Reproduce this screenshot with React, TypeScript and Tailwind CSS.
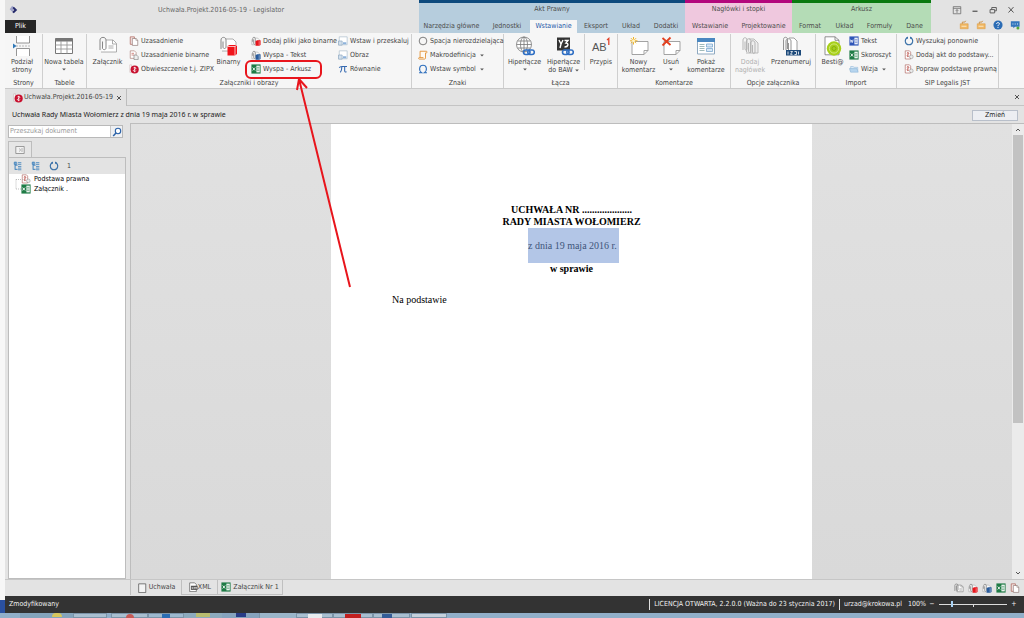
import React from 'react';

type IconProps = { className?: string };
type Icon = (props: IconProps) => React.JSX.Element;

const Clip = () => (
  <path d="M2 7V3.2C2 .9 5.2.9 5.2 3.2V9c0 1.4-2 1.4-2 0V4" fill="none" stroke="#8b8b8b" strokeWidth="1" />
);

const PaperClip: Icon = ({ className }) => (
  <svg viewBox="0 0 12 12" className={className}>
    <path d="M3.5 2.5h5l2.5 2v6h-7.5z" fill="#fafafa" stroke="#888" strokeWidth=".8" />
    <path d="M8.3 2.5v2.2H11M6.5 7h3M6.5 8.6h3" fill="none" stroke="#888" strokeWidth=".6" />
    <path d="M1 9.5V2.8C1 .6 4.8.6 4.8 2.8V8c0 1.3-2 1.3-2 0V3.6" fill="none" stroke="#777" strokeWidth=".8" />
  </svg>
);

const clipWith = (color: string): Icon => ({ className }) => (
  <svg viewBox="0 0 12 12" className={className}>
    <path d="M4 2.5h4l2 2v6H1V4" fill="#fafafa" stroke="#999" strokeWidth=".6" />
    <Clip />
    <path d="M5.5 6l2-.8h4v5.6l-1.6 1H5.5z" fill={color} />
    <path d="M9.8 6.2v5" stroke="#fff" strokeWidth=".5" />
  </svg>
);
const ClipRed = clipWith('#e8151c');
const ClipBlue = clipWith('#285b9c');

const ReadDoc: Icon = ({ className }) => (
  <svg viewBox="0 0 12 12" className={className}>
    <path d="M1.5 1h5v9h-5z" fill="#f5e6e4" stroke="#a8574d" strokeWidth=".8" />
    <path d="M4 3h4.5l2 2v6.3H4z" fill="#fff" stroke="#8c7672" strokeWidth=".8" />
    <path d="M8.3 3v2.2h2.2" fill="none" stroke="#8c7672" strokeWidth=".6" />
  </svg>
);

const ReadDocs: Icon = ({ className }) => (
  <svg viewBox="0 0 12 12" className={className}>
    <path d="M1.5 1h5l2 2v7h-7z" fill="#fff" stroke="#a06a63" strokeWidth=".7" />
    <path d="M3 4h3M3 6h3" stroke="#c0544c" strokeWidth=".8" />
    <path d="M6 6h3l2 2v3.5H6z" fill="#eee" stroke="#777" strokeWidth=".7" />
  </svg>
);

const Emblem: Icon = ({ className }) => (
  <svg viewBox="0 0 12 12" className={className}>
    <path d="M1 1h2v9H1z" fill="#fff" stroke="#b99" strokeWidth=".5" />
    <circle cx="6.8" cy="6.6" r="4.9" fill="#c8102e" />
    <path d="M6.8 3.4v6.4M5.2 5c0-1 3.2-1 3.2 0S5.2 7 5.2 8s3.2 1 3.2 0" fill="none" stroke="#fff" strokeWidth=".9" />
  </svg>
);

const Sheet: Icon = ({ className }) => (
  <svg viewBox="0 0 12 12" className={className}>
    <path d="M.5.5h11v11H.5z" fill="#1e7b45" />
    <path d="M6.5 2h4v8h-4z" fill="#fff" />
    <path d="M7 4h3M7 6h3M7 8h3" stroke="#1e7b45" strokeWidth=".7" />
    <path d="M2 4.2l3 3.6M5 4.2L2 7.8" stroke="#fff" strokeWidth="1" />
  </svg>
);

const WordDoc: Icon = ({ className }) => (
  <svg viewBox="0 0 12 12" className={className}>
    <path d="M.5.5h11v11H.5z" fill="#2f55b8" />
    <path d="M6.5 2h4v8h-4z" fill="#fff" />
    <path d="M7 4h3M7 6h3M7 8h3" stroke="#2f55b8" strokeWidth=".7" />
    <path d="M1.6 4.2l.8 3.6.9-3 .9 3 .8-3.6" fill="none" stroke="#fff" strokeWidth=".8" />
  </svg>
);

const Picture: Icon = ({ className }) => (
  <svg viewBox="0 0 12 12" className={className}>
    <path d="M1.500 1h9.500v9.500H1.500z" fill="#fff" stroke="#a9bccb" strokeWidth=".8" />
    <path d="M.6 6h4.400v5H.6z" fill="#d3e0ec" stroke="#7f9dba" strokeWidth=".7" />
    <path d="M6 7.500h4v2.500H6z" fill="#8db2db" />
  </svg>
);

const Pi: Icon = ({ className }) => (
  <svg viewBox="0 0 12 12" className={className}>
    <path d="M1.500 4.500C2.500 2.500 4 3 6 3h4.800M4.600 3.200c0 3-.4 5-1.800 6.800M8 3.200v5c0 1.500 1 1.800 2.200.9" fill="none" stroke="#3569b0" strokeWidth="1.300" />
  </svg>
);

const Ring: Icon = ({ className }) => (
  <svg viewBox="0 0 12 12" className={className}>
    <circle cx="6" cy="6" r="4.600" fill="none" stroke="#555" strokeWidth=".9" />
  </svg>
);

const Scroll: Icon = ({ className }) => (
  <svg viewBox="0 0 12 12" className={className}>
    <path d="M2.500 9V1.500h7.500c1.200 0 1.200 2 0 2H9V9.500c0 1.400-1 1.400-1.500 1.400h-6c-1 0-1-1.800 0-1.800h5" fill="#fffaf2" stroke="#e18a28" strokeWidth="1" />
  </svg>
);

const Omega: Icon = ({ className }) => (
  <svg viewBox="0 0 12 12" className={className}>
    <path d="M1.200 10.500h3.200c-4-3-3-9 1.600-9s5.600 6 1.600 9h3.200" fill="none" stroke="#3070bd" strokeWidth="1.300" />
  </svg>
);

const Folder: Icon = ({ className }) => (
  <svg viewBox="0 0 12 12" className={className}>
    <path d="M2 9V3h3l1 1h4.500v5" fill="#dcebf7" stroke="#83aed3" strokeWidth=".6" />
    <path d="M.5 5.500h9L11 9.800H2z" fill="#b7d5ee" stroke="#83aed3" strokeWidth=".6" />
  </svg>
);

const Refresh: Icon = ({ className }) => (
  <svg viewBox="0 0 12 12" className={className}>
    <path d="M4 2C0 4 1 10.500 6 10.500S12 4 8 2" fill="none" stroke="#3a71a8" strokeWidth="1.300" />
    <path d="M4.800.6v3L2.300 2zM7.200.6v3L9.700 2z" fill="#3a71a8" />
  </svg>
);

const Rules: Icon = ({ className }) => (
  <svg viewBox="0 0 12 12" className={className}>
    <path d="M1.500 1h5l1.500 1.500v8.300H1.500z" fill="#fff" stroke="#a5554d" strokeWidth=".7" />
    <path d="M4.700 2.500v6M3.500 4c0-1 2.400-1 2.400 0S3.500 6 3.500 7s2.400 1 2.400 0" fill="none" stroke="#b23b33" strokeWidth=".7" />
    <circle cx="8.800" cy="8.200" r="2.200" fill="#eaeaea" stroke="#888" strokeWidth=".6" />
  </svg>
);

const TreeGlyph: Icon = ({ className }) => (
  <svg viewBox="0 0 12 12" className={className}>
    <path d="M2.500 1v9.500M2.500 5h3M2.500 10h3" fill="none" stroke="#3f82bd" strokeWidth="1.200" />
    <path d="M1.500 1.500h3v2.500h-3zM6 2h4M6 4h4M6 6.500h4M6 8.500h4M6 10.500h4" fill="none" stroke="#3f82bd" strokeWidth="1" />
  </svg>
);

const BlankBox: Icon = ({ className }) => (
  <svg viewBox="0 0 12 12" className={className}>
    <path d="M2 1h8.500v10.500H2z" fill="#f4f4f4" stroke="#555" strokeWidth=".9" />
  </svg>
);

const XmlDoc: Icon = ({ className }) => (
  <svg viewBox="0 0 12 12" className={className}>
    <path d="M2 1h6l2 2v8.500H2z" fill="#fff" stroke="#555" strokeWidth=".8" />
    <path d="M3.500 4.500h8v5h-8z" fill="#555" />
    <path d="M4.500 6l2 2.500M6.500 6l-2 2.500M8 8.500V6l1 1.500L10 6v2.500" fill="none" stroke="#fff" strokeWidth=".6" />
  </svg>
);

const PageBreak: Icon = ({ className }) => (
  <svg viewBox="0 0 20 20" className={className}>
    <path d="M4.500 0v7h13V0M4.500 20v-7.500h13V20" fill="#fff" stroke="#8a8a8a" strokeWidth=".9" />
    <path d="M4 10h14" stroke="#aaa" strokeDasharray="2 1" strokeWidth=".8" />
    <path d="M1 7.500L4.500 10 1 12.500z" fill="#2f78b7" />
  </svg>
);

const TableIcon: Icon = ({ className }) => (
  <svg viewBox="0 0 20 20" className={className}>
    <path d="M1.500 2.500h17v15h-17z" fill="#fff" stroke="#777" />
    <path d="M1.500 2.500h17v3h-17z" fill="#777" />
    <path d="M1.500 9h17M1.500 13h17M7 5v12.500M13 5v12.500" stroke="#999" strokeWidth=".9" />
  </svg>
);

const BigClip: Icon = ({ className }) => (
  <svg viewBox="0 0 20 20" className={className}>
    <path d="M8 4h7l3.500 3.500V16H3" fill="#fff" stroke="#999" strokeWidth=".8" />
    <path d="M14.500 4v4h4M10.500 10h5M10.500 12h5" fill="none" stroke="#999" strokeWidth=".8" />
    <path d="M2 14V4c0-3.500 6-3.500 6 0v8c0 2.200-3.500 2.200-3.500 0V5.500" fill="none" stroke="#888" strokeWidth="1" />
  </svg>
);

const BigBinary: Icon = ({ className }) => (
  <svg viewBox="0 0 20 20" className={className}>
    <path d="M7 3h7l3 3v9H3" fill="#fff" stroke="#999" strokeWidth=".8" />
    <path d="M2 13V4c0-3.500 5-3.500 5 0v7c0 2-3 2-3 0V5.500" fill="none" stroke="#888" strokeWidth="1" />
    <path d="M8.500 10l2-1h7.500v9l-2 1.500H8.500z" fill="#f0141b" />
    <path d="M16 10.500v9M8.500 10.500H16l2-1.500" fill="none" stroke="#fff" strokeWidth=".7" />
  </svg>
);

const Links = () => (
  <g fill="none" stroke="#2f6fc4" strokeWidth="1.600">
    <rect x="8.500" y="14" width="6.500" height="4.500" rx="2.200" />
    <rect x="12.800" y="14" width="6.500" height="4.500" rx="2.200" />
  </g>
);

const Globe: Icon = ({ className }) => (
  <svg viewBox="0 0 20 20" className={className}>
    <g fill="none" stroke="#777" strokeWidth=".8">
      <circle cx="9" cy="8.500" r="7.500" fill="#fff" />
      <ellipse cx="9" cy="8.500" rx="3.500" ry="7.500" />
      <path d="M1.500 8.500h15M2.500 5h13M2.500 12h13M9 1v15" />
    </g>
    <Links />
  </svg>
);

const Baw: Icon = ({ className }) => (
  <svg viewBox="0 0 20 20" className={className}>
    <path d="M3 1.500h13v13H3z" fill="#333" />
    <path d="M5 4l2 4 2-4M7 8l-1 4M10.500 4.500h3.500l-2 2.500c3 0 2.500 4-1.500 4" fill="none" stroke="#fff" strokeWidth="1.400" />
    <Links />
  </svg>
);

const Footnote: Icon = ({ className }) => (
  <svg viewBox="0 0 20 20" className={className}>
    <text x="1" y="15" fontSize="11" fill="#555" fontFamily="Liberation Sans">AB</text>
    <path d="M16 4l1.800-1.500V9" fill="none" stroke="#e2452d" strokeWidth="1.300" />
  </svg>
);

const NewNote: Icon = ({ className }) => (
  <svg viewBox="0 0 20 20" className={className}>
    <path d="M3 5.500h16v9l-4 4H3z" fill="#fff" stroke="#999" strokeWidth=".9" />
    <path d="M15 18.500v-4h4" fill="none" stroke="#999" strokeWidth=".9" />
    <path d="M4.500 1v7.500M1 4.800h7.500M2 2.200l5 5M7 2.200l-5 5" stroke="#f0b323" strokeWidth="1" />
    <circle cx="4.500" cy="4.800" r="1.500" fill="#fff4c6" />
  </svg>
);

const DropNote: Icon = ({ className }) => (
  <svg viewBox="0 0 20 20" className={className}>
    <path d="M3 5.500h16v9l-4 4H3z" fill="#fff" stroke="#999" strokeWidth=".9" />
    <path d="M15 18.500v-4h4" fill="none" stroke="#999" strokeWidth=".9" />
    <path d="M1.500 2l8 7M9.500 1.500l-8 8" stroke="#e2401f" strokeWidth="1.800" />
  </svg>
);

const ShowNotes: Icon = ({ className }) => (
  <svg viewBox="0 0 20 20" className={className}>
    <path d="M1.500 2.500h17v15.500h-17z" fill="#fff" stroke="#8fa9c0" />
    <path d="M1 2h18v4H1z" fill="#4a87c0" />
    <path d="M3.500 8.500h5M3.500 10.500h5M3.500 12.500h5M3.500 14.500h5" stroke="#8aa" strokeWidth=".8" />
    <path d="M10.500 8h6v3h-6zM10.500 12.500h6v3h-6z" fill="#d8e9f7" stroke="#6e9ec8" strokeWidth=".7" />
  </svg>
);

const ClipsGrey: Icon = ({ className }) => (
  <svg viewBox="0 0 20 20" className={className}>
    <path d="M9 3h5l4 4v10H6" fill="#eee" stroke="#bbb" />
    <g fill="none" stroke="#b5b5b5" strokeWidth="1">
      <path d="M3 14V4c0-3 4-3 4 0v9c0 1.500-2 1.500-2 0V5.500M6.500 16V5c0-3 4.500-3 4.500 0v10c0 2-2.500 2-2.500 0V7M10.500 17V7c0-3 4.500-3 4.500 0v9c0 2-2.500 2-2.500 0V9" />
    </g>
  </svg>
);

const Renumber: Icon = ({ className }) => (
  <svg viewBox="0 0 20 20" className={className}>
    <path d="M8 2h5l3 3v10H6" fill="#fff" stroke="#888" strokeWidth=".8" />
    <path d="M2.500 14V3.500c0-3 4-3 4 0V13M5 14V5c0-3 5-3 5 0v9c0 1.800-2.500 1.800-2.500 0V7" fill="none" stroke="#888" strokeWidth=".9" />
    <path d="M5 14h15v5.500H5z" fill="#1d4a7a" />
    <path d="M7 15.500v3M9.500 15.500h2l-2 2.800h2M13.500 15.500h2v3h-2M17.500 15.500v3" fill="none" stroke="#fff" strokeWidth=".8" />
  </svg>
);

const Bestia: Icon = ({ className }) => (
  <svg viewBox="0 0 20 20" className={className}>
    <path d="M2 .8h10l4 3.500v14.500H2z" fill="#fff" stroke="#777" strokeWidth=".8" />
    <path d="M12 .8v3.500h4" fill="none" stroke="#777" strokeWidth=".8" />
    <circle cx="11" cy="12.500" r="7.200" fill="#a7cf1a" />
    <circle cx="11" cy="12.500" r="4.600" fill="none" stroke="#d3e97a" strokeWidth="1" />
    <path d="M9 12.500a2 2 0 114 0 2 2 0 01-4 0" fill="none" stroke="#82aa10" strokeWidth=".9" />
  </svg>
);

function Small({ icon: I, label, arrow }: { icon: Icon; label: string; arrow?: boolean }) {
  return (
    <button className="flex h-3.5 items-center gap-0.5 whitespace-nowrap">
      <I className="size-2.5 shrink-0" />
      <span>{label}</span>
      {arrow && <Caret className="ml-0.5" />}
    </button>
  );
}

function Caret({ className = '' }: IconProps) {
  return (
    <svg viewBox="0 0 4 3" className={`h-[3px] w-1 ${className}`}>
      <path d="M.2.400h3.600L2 2.500z" fill="#555" />
    </svg>
  );
}

type BigProps = { icon: Icon; lines: string[]; width: string; arrow?: boolean; disabled?: boolean };

function Big({ icon: I, lines, width, arrow, disabled }: BigProps) {
  return (
    <button
      disabled={disabled}
      className={`flex ${width} shrink-0 flex-col items-center whitespace-nowrap pt-0.5 leading-[8px] disabled:text-[#b0b0b0]`}
    >
      <I className="mb-0.5 size-5 shrink-0" />
      {lines.map((line, i) => (
        <span key={line} className="flex items-center gap-0.5">
          {line}
          {arrow && i === 1 && <Caret />}
        </span>
      ))}
      {arrow && lines.length === 1 && <Caret className="mt-0.5" />}
    </button>
  );
}

function Group({ title, width, children }: { title: string; width: string; children: React.ReactNode }) {
  return (
    <section className={`flex ${width} shrink-0 flex-col`}>
      <div className="flex h-11 border-r border-[#cfcfcf]">{children}</div>
      <h2 className="flex h-2.5 items-center justify-center border-r border-[#cfcfcf]">{title}</h2>
    </section>
  );
}

type Tab = { label: string; width: string; active?: boolean };

function TabSet({ title, colors, tabs }: { title: string; colors: string; tabs: Tab[] }) {
  return (
    <div className={`flex shrink-0 flex-col border-t-[3px] ${colors}`}>
      <div className="flex h-[13px] items-center justify-center">{title}</div>
      <div className="mt-1 flex h-[13px]">
        {tabs.map((t) => (
          <button
            key={t.label}
            className={`${t.width} whitespace-nowrap ${t.active ? 'bg-[#f6f6f6] text-[#2559a8]' : ''}`}
          >
            {t.label}
          </button>
        ))}
      </div>
    </div>
  );
}

function TitleBar() {
  return (
    <header className="flex h-[33px] shrink-0 bg-[#e3e3e3] text-[#4c4c4c]">
      <div className="flex w-[414px] shrink-0 flex-col justify-between">
        <div className="flex h-5 items-center">
          <svg viewBox="0 0 12 12" className="ml-[3px] size-2.5">
            <path d="M5 1l3 3-3 4-3-3z" fill="#9fa3c9" />
            <path d="M7 2l4 4-4 4-2-1.500L7.500 6 5.500 3.500z" fill="#252a6b" />
          </svg>
          <h1 className="flex-1 pl-[5px] text-center text-[#666]">Uchwała.Projekt.2016-05-19 - Legislator</h1>
        </div>
        <button className="h-[13px] w-[31px] bg-[#262626] text-white">Plik</button>
      </div>
      <TabSet
        title="Akt Prawny"
        colors="border-[#0d4a7d] bg-[#b6cddd]"
        tabs={[
          { label: 'Narzędzia główne', width: 'w-[65px]' },
          { label: 'Jednostki', width: 'w-[46px]' },
          { label: 'Wstawianie', width: 'w-[47px]', active: true },
          { label: 'Eksport', width: 'w-[38px]' },
          { label: 'Układ', width: 'w-8' },
          { label: 'Dodatki', width: 'w-[38px]' },
        ]}
      />
      <TabSet
        title="Nagłówki i stopki"
        colors="border-[#b3077c] bg-[#efc8de]"
        tabs={[
          { label: 'Wstawianie', width: 'w-[50px]' },
          { label: 'Projektowanie', width: 'w-[57px]' },
        ]}
      />
      <TabSet
        title="Arkusz"
        colors="border-[#0a7a10] bg-[#b4dcb6]"
        tabs={[
          { label: 'Format', width: 'w-9' },
          { label: 'Układ', width: 'w-[33px]' },
          { label: 'Formuły', width: 'w-[37px]' },
          { label: 'Dane', width: 'w-[33px]' },
        ]}
      />
      <div className="ml-auto flex flex-col items-end justify-between pb-[3px] pt-[5px] pr-1">
        <div className="flex gap-2 pr-1">
          <button aria-label="Zwiń wstążkę">
            <svg viewBox="0 0 12 12" className="size-2.5">
              <path d="M1.500 2h9v8.500h-9zM1.500 4h9M6 9.500V5.500M4.500 7L6 5.500 7.500 7" fill="none" stroke="#666" strokeWidth=".9" />
            </svg>
          </button>
          <button aria-label="Minimalizuj">
            <svg viewBox="0 0 12 12" className="size-2.5">
              <path d="M3 7.500h6" stroke="#555" strokeWidth="1.500" />
            </svg>
          </button>
          <button aria-label="Przywróć">
            <svg viewBox="0 0 12 12" className="size-2.5">
              <path d="M2.500 5.500h5.500v4H2.500zM4.500 5.500V3h5.500v4H8" fill="none" stroke="#555" strokeWidth="1.100" />
            </svg>
          </button>
          <button aria-label="Zamknij">
            <svg viewBox="0 0 12 12" className="size-2.5">
              <path d="M3 2.500l6 6.500M9 2.500L3 9" stroke="#555" strokeWidth="1.200" />
            </svg>
          </button>
        </div>
        <div className="flex gap-[7px]">
          {['a', 'b'].map((k) => (
            <svg key={k} viewBox="0 0 12 12" className="size-2.5">
              <path d="M1.500 4.500h9.500v6H1.500z" fill="#f0b763" stroke="#d9963a" strokeWidth=".6" />
              <path d="M4 4.500V2.500h3l1-1.500" fill="none" stroke="#c98834" strokeWidth="1" />
              <path d="M3 7.500h6" stroke="#fff0d4" strokeWidth="1" />
            </svg>
          ))}
          <svg viewBox="0 0 12 12" className="size-2.5">
            <circle cx="6" cy="6" r="5.500" fill="#2b6cb5" />
            <path d="M4.300 4.600C4.300 2.600 7.800 2.700 7.700 4.600 7.600 5.800 6 5.800 6 7.300M6 8.300v1.200" fill="none" stroke="#fff" strokeWidth="1.200" />
          </svg>
          <svg viewBox="0 0 12 12" className="size-2.5">
            <path d="M1 1.500h10.500v6.500H6l-2 2V8H1z" fill="#3276bd" />
            <path d="M3 4.800h1M5.700 4.800h1M8.400 4.800h1" stroke="#fff" strokeWidth="1.200" />
            <circle cx="9.500" cy="9.500" r="1.800" fill="#56a83c" />
          </svg>
        </div>
      </div>
    </header>
  );
}

function Ribbon() {
  return (
    <div className="flex h-[55px] shrink-0 overflow-hidden bg-[#f6f6f6] pt-px text-[#444]">
      <Group title="Strony" width="w-[38px]">
        <Big icon={PageBreak} lines={['Podział', 'strony']} width="w-[34px]" />
      </Group>
      <Group title="Tabele" width="w-11">
        <Big icon={TableIcon} lines={['Nowa tabela']} width="w-[42px]" arrow />
      </Group>
      <Group title="Załączniki i obrazy" width="w-[325px]">
        <Big icon={BigClip} lines={['Załącznik']} width="w-[41px]" />
        <div className="w-[87px] pl-px">
          <Small icon={ReadDoc} label="Uzasadnienie" />
          <Small icon={ReadDocs} label="Uzasadnienie binarne" />
          <Small icon={Emblem} label="Obwieszczenie t.j. ZIPX" />
        </div>
        <Big icon={BigBinary} lines={['Binarny']} width="w-[27px]" />
        <div className="ml-[9px] w-[87px]">
          <Small icon={ClipRed} label="Dodaj pliki jako binarne" />
          <Small icon={ClipBlue} label="Wyspa - Tekst" />
          <Small icon={Sheet} label="Wyspa - Arkusz" />
        </div>
        <div>
          <Small icon={Picture} label="Wstaw i przeskaluj" />
          <Small icon={Picture} label="Obraz" />
          <Small icon={Pi} label="Równanie" />
        </div>
      </Group>
      <Group title="Znaki" width="w-[92px]">
        <div className="pl-1.5">
          <Small icon={Ring} label="Spacja nierozdzielająca" />
          <Small icon={Scroll} label="Makrodefinicja" arrow />
          <Small icon={Omega} label="Wstaw symbol" arrow />
        </div>
      </Group>
      <Group title="Łącza" width="w-[114px]">
        <Big icon={Globe} lines={['Hiperłącze']} width="w-[41px]" arrow />
        <Big icon={Baw} lines={['Hiperłącze', 'do BAW']} width="w-[37px]" arrow />
        <div className="ml-0.5 h-9 border-l border-[#cfcfcf]" />
        <Big icon={Footnote} lines={['Przypis']} width="w-8" />
      </Group>
      <Group title="Komentarze" width="w-[113px]">
        <Big icon={NewNote} lines={['Nowy', 'komentarz']} width="w-[41px]" />
        <Big icon={DropNote} lines={['Usuń']} width="w-6" arrow />
        <Big icon={ShowNotes} lines={['Pokaż', 'komentarze']} width="w-[46px]" />
      </Group>
      <Group title="Opcje załącznika" width="w-[85px]">
        <Big icon={ClipsGrey} lines={['Dodaj', 'nagłówek']} width="w-[38px]" disabled />
        <Big icon={Renumber} lines={['Przenumeruj']} width="w-[44px]" />
      </Group>
      <Group title="Import" width="w-[81px]">
        <Big icon={Bestia} lines={['Besti@']} width="w-[33px]" />
        <div>
          <Small icon={WordDoc} label="Tekst" />
          <Small icon={Sheet} label="Skoroszyt" />
          <Small icon={Folder} label="Wizja" arrow />
        </div>
      </Group>
      <Group title="SIP Legalis JST" width="w-[102px]">
        <div className="pl-[7px]">
          <Small icon={Refresh} label="Wyszukaj ponownie" />
          <Small icon={Rules} label="Dodaj akt do podstawy..." />
          <Small icon={Rules} label="Popraw podstawę prawną" />
        </div>
      </Group>
    </div>
  );
}

function CloseMark() {
  return (
    <svg viewBox="0 0 6 6" className="size-1.5">
      <path d="M1 1l4 4M5 1L1 5" stroke="#444" strokeWidth=".9" />
    </svg>
  );
}

function SidePanel() {
  return (
    <aside className="flex w-[118px] shrink-0 flex-col">
      <div className="mt-0.5 flex h-[13px] w-[115px] border border-[#b9b9b9] bg-white">
        <input
          aria-label="Przeszukaj dokument"
          placeholder="Przeszukaj dokument"
          className="min-w-0 flex-1 px-px outline-none placeholder:text-[#9a9a9a]"
        />
        <button aria-label="Szukaj" className="flex w-3 items-center justify-center border-l border-[#c9c9c9] bg-[#eef0f3]">
          <svg viewBox="0 0 10 10" className="size-2.5">
            <circle cx="6" cy="4" r="2.700" fill="#fff" stroke="#2b62a8" strokeWidth="1.100" />
            <path d="M4 6L1.200 9" stroke="#2b62a8" strokeWidth="1.500" />
          </svg>
        </button>
      </div>
      <button
        aria-label="Struktura"
        className="mt-[3px] flex h-4 w-6 items-center justify-center border border-b-0 border-[#bdbdbd] bg-[#e6e6e6]"
      >
        <svg viewBox="0 0 10 10" className="size-2.5">
          <path d="M.8 1.500h8.400v7H.8z" fill="#f2f2f2" stroke="#888" strokeWidth=".8" />
          <path d="M4 3.500L5.800 5 4 6.500M7 3v4" fill="none" stroke="#999" strokeWidth=".7" />
        </svg>
      </button>
      <div className="flex min-h-0 flex-1 flex-col border border-[#bdbdbd] bg-white">
        <div className="flex h-4 items-center gap-2 bg-[#e3e3e3] pl-1">
          <TreeGlyph className="size-2.5" />
          <TreeGlyph className="size-2.5" />
          <Refresh className="size-2.5" />
          <span className="text-[#444]">1</span>
        </div>
        <ul className="relative pl-3 text-black">
          <svg viewBox="0 0 8 20" className="absolute left-1.5 top-0 h-5 w-2">
            <path d="M1 5.500V15M1 5.500h7M1 15h7" fill="none" stroke="#aaa" strokeWidth=".8" strokeDasharray="1 1" />
          </svg>
          <li className="flex h-2.5 items-center gap-[3px]">
            <Rules className="size-2.5" />
            Podstawa prawna
          </li>
          <li className="flex h-2.5 items-center gap-[3px]">
            <Sheet className="size-2.5" />
            Załącznik .
          </li>
        </ul>
      </div>
    </aside>
  );
}

function Canvas() {
  return (
    <main className="ml-1 flex min-w-0 flex-1 border-l border-t border-[#bdbdbd]">
      <div className="flex min-w-0 flex-1 justify-center bg-linear-to-b from-[#e1e1e1] to-[#d9d9d9]">
        <article className="w-[481px] bg-white pt-20 font-['Liberation_Serif',serif] text-[10px] leading-[12px] text-black">
          <p className="text-center font-bold">
            UCHWAŁA NR ....................
            <br />
            RADY MIASTA WOŁOMIERZ
          </p>
          <p className="ml-[197px] flex h-[35px] w-[91px] items-center whitespace-nowrap bg-[#b3c6e7] text-[#40557a]">
            z dnia 19 maja 2016 r.
          </p>
          <p className="text-center font-bold">w sprawie</p>
          <p className="mt-[19px] pl-[61px]">Na podstawie</p>
        </article>
      </div>
      <div className="flex w-3 shrink-0 flex-col items-center bg-[#ebebeb] py-0.5">
        <svg viewBox="0 0 8 8" className="size-2">
          <path d="M2 5l2-2 2 2" fill="none" stroke="#555" />
        </svg>
        <div className="mt-px h-[288px] w-2.5 bg-[#c2c2c2]" />
        <svg viewBox="0 0 8 8" className="mt-auto size-2">
          <path d="M2 3l2 2 2-2" fill="none" stroke="#555" />
        </svg>
      </div>
    </main>
  );
}

function BottomTabs() {
  return (
    <div className="flex h-[17px] shrink-0 border-t border-[#c6c6c6] bg-[#e3e3e3] text-[#444]">
      <div className="ml-[125px] flex h-[15px]">
        <button className="flex w-[52px] items-center justify-center gap-0.5 border-x border-[#c0c0c0]">
          <BlankBox className="size-2.5" />
          Uchwała
        </button>
        <button className="flex w-9 items-center justify-center border-b border-r border-[#c0c0c0]">
          <XmlDoc className="size-2.5" />
          XML
        </button>
        <button className="flex w-[65px] items-center justify-center gap-0.5 border-b border-r border-[#c0c0c0]">
          <Sheet className="size-2.5" />
          Załącznik Nr 1
        </button>
      </div>
      <div className="ml-auto flex items-center gap-1 pr-1">
        <PaperClip className="size-2.5" />
        <ClipRed className="size-2.5" />
        <ClipBlue className="size-2.5" />
        <Sheet className="size-2.5" />
        <ReadDoc className="size-2.5" />
      </div>
    </div>
  );
}

function StatusBar() {
  return (
    <footer className="flex h-[17px] shrink-0 items-center bg-[#333] pl-1 text-[#f2f2f2]">
      <span>Zmodyfikowany</span>
      <span className="ml-auto border-l border-[#e0e0e0] px-1 leading-[11px]">
        LICENCJA OTWARTA, 2.2.0.0 (Ważna do 23 stycznia 2017)
      </span>
      <span className="border-l border-[#e0e0e0] pl-1 leading-[11px]">urzad@krokowa.pl</span>
      <label htmlFor="zoom" className="ml-1.5 w-5">100%</label>
      <button aria-label="Pomniejsz" className="w-2">−</button>
      <span className="relative mx-[3px] flex h-2 w-[68px] items-center">
        <input
          id="zoom"
          type="range"
          defaultValue="18"
          className="h-2 w-full appearance-none bg-transparent [&::-webkit-slider-runnable-track]:h-px [&::-webkit-slider-runnable-track]:bg-[#ddd] [&::-webkit-slider-thumb]:-mt-[3px] [&::-webkit-slider-thumb]:h-[6px] [&::-webkit-slider-thumb]:w-0.5 [&::-webkit-slider-thumb]:appearance-none [&::-webkit-slider-thumb]:bg-[#a9d3f5]"
        />
        <span className="absolute left-1/2 top-[3px] h-[3px] w-px bg-[#ddd]" />
      </span>
      <button aria-label="Powiększ" className="mr-1.5 w-2">+</button>
    </footer>
  );
}

function Taskbar() {
  return (
    <nav className="flex h-[5px] shrink-0 overflow-hidden bg-[#91afc9]">
      <div className="ml-5 h-full w-[53px] bg-[#84a4bc]">
        <div className="ml-8 h-1 w-2.5 rounded-t-full bg-[#d7c65b]" />
      </div>
      <div className="w-[34px] border border-[#7b94a8] bg-[#a9bfd0]" />
      <div className="ml-1 flex w-[37px] justify-center border border-[#7b94a8] bg-[#a9bfd0]">
        <div className="h-1 w-2 rounded-t-full bg-[#c65a56]" />
      </div>
      <div className="flex w-9 justify-center border border-[#7b94a8] bg-[#9db9cf]">
        <div className="h-1 w-2 bg-[#2b6db3]" />
      </div>
      <div className="flex w-[38px] justify-center bg-[#8caabd]">
        <div className="h-1 w-3.5 bg-[#b9bd70]" />
      </div>
      <div className="flex w-[38px] justify-center border-r border-[#7b94a8] bg-[#86a3bd]">
        <div className="h-1 w-2.5 bg-[#293c86]" />
      </div>
      <div className="w-9 bg-[#9ab5c9]" />
      <div className="flex w-[37px] justify-center border border-[#7b94a8] bg-[#a9bfd0]">
        <div className="h-1 w-3.5 bg-[#e8ecef]" />
      </div>
      <div className="flex w-10 justify-center border border-[#7b94a8] bg-[#a9bfd0]">
        <div className="h-1 w-4 bg-[#c11f1f]" />
      </div>
      <div className="flex w-[37px] items-start border border-[#7b94a8] bg-[#a9bfd0] pl-2">
        <div className="h-1 w-2.5 bg-[#345c96]" />
      </div>
      <div className="ml-px w-9 border border-[#7b94a8] bg-[#c5d1dc]" />
    </nav>
  );
}

export default function App() {
  return (
    <div className="relative flex h-screen flex-col overflow-hidden bg-[#f7f7f7] font-['DejaVu_Sans_Condensed','DejaVu_Sans',sans-serif] text-[7px] leading-[9px]">
      <div className="flex min-h-0 flex-1">
        <div className="flex w-[5px] shrink-0 flex-col justify-end">
          <div className="h-[13px] bg-[#2a50a0]" />
        </div>
        <div className="flex min-w-0 flex-1 flex-col bg-[#e3e3e3]">
          <TitleBar />
          <Ribbon />
          <div className="flex h-[18px] shrink-0 border-t border-[#c9c9c9] text-[#444]">
            <div className="flex w-[122px] items-center gap-px border-r border-[#bdbdbd] pl-2">
              <Emblem className="size-2.5" />
              <span className="whitespace-nowrap">Uchwała.Projekt.2016-05-19</span>
              <button aria-label="Zamknij kartę" className="ml-auto mr-1">
                <CloseMark />
              </button>
            </div>
            <div className="flex flex-1 items-center justify-end border-b border-[#c4c4c4] pr-1">
              <button aria-label="Zamknij dokument">
                <CloseMark />
              </button>
            </div>
          </div>
          <div className="flex h-[17px] shrink-0 items-center justify-between pl-[7px] pr-1.5 text-[#222]">
            <h2 className="font-['Noto_Sans',sans-serif]">
              Uchwała Rady Miasta Wołomierz z dnia 19 maja 2016 r. w sprawie
            </h2>
            <button className="mt-px h-[11px] w-[46px] border border-[#b8bfca] bg-[#eceef2]">Zmień</button>
          </div>
          <div className="flex min-h-0 flex-1 pl-[3px]">
            <SidePanel />
            <Canvas />
          </div>
          <BottomTabs />
          <StatusBar />
        </div>
      </div>
      <Taskbar />
      <svg viewBox="0 0 110 230" className="pointer-events-none absolute left-[244px] top-[60px] h-[230px] w-[110px]">
        <g fill="none" stroke="#e8151c" strokeWidth="2">
          <rect x="2" y="1" width="75" height="17" rx="5" />
          <path d="M106 227L55 19M53 30l2-11 8 9" />
        </g>
      </svg>
    </div>
  );
}
